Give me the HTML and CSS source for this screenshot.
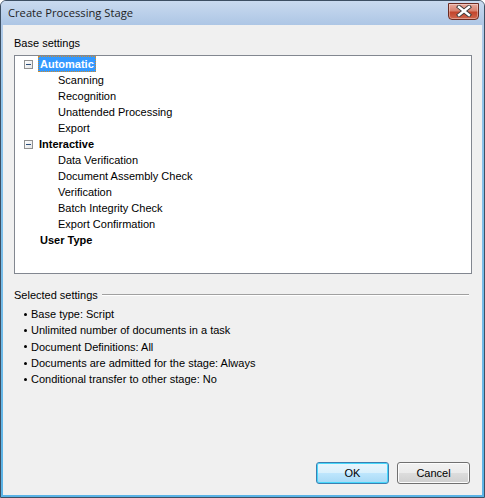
FILE: index.html
```html
<!DOCTYPE html>
<html>
<head>
<meta charset="utf-8">
<link rel="stylesheet" href="styles.css">
</head>
<body>
<div class="window">
  <div class="titlebar">
    <span class="title">Create Processing Stage</span>
    <div class="close">
      <svg width="16" height="12" viewBox="0 0 16 12">
        <path d="M3 2 L13 10 M13 2 L3 10" stroke="#3a3a3a" stroke-width="4.2" stroke-linecap="square"/>
        <path d="M3 2 L13 10 M13 2 L3 10" stroke="#ffffff" stroke-width="2.4" stroke-linecap="square"/>
      </svg>
    </div>
  </div>
  <div class="client">
    <div class="label">Base settings</div>
    <div class="tree">
      <div class="row group"><span class="exp"></span><span class="txt bold sel">Automatic</span></div>
      <div class="row child"><span class="txt">Scanning</span></div>
      <div class="row child"><span class="txt">Recognition</span></div>
      <div class="row child"><span class="txt">Unattended Processing</span></div>
      <div class="row child"><span class="txt">Export</span></div>
      <div class="row group"><span class="exp"></span><span class="txt bold">Interactive</span></div>
      <div class="row child"><span class="txt">Data Verification</span></div>
      <div class="row child"><span class="txt">Document Assembly Check</span></div>
      <div class="row child"><span class="txt">Verification</span></div>
      <div class="row child"><span class="txt">Batch Integrity Check</span></div>
      <div class="row child"><span class="txt">Export Confirmation</span></div>
      <div class="row group nochild"><span class="txt bold">User Type</span></div>
    </div>
    <div class="sep"><span>Selected settings</span><div class="line"></div></div>
    <ul class="list">
      <li>Base type: Script</li>
      <li>Unlimited number of documents in a task</li>
      <li>Document Definitions: All</li>
      <li>Documents are admitted for the stage: Always</li>
      <li>Conditional transfer to other stage: No</li>
    </ul>
    <div class="buttons">
      <button class="btn default">OK</button>
      <button class="btn">Cancel</button>
    </div>
  </div>
</div>
</body>
</html>
```
FILE: styles.css
```css
* { box-sizing: border-box; }
html, body { margin: 0; padding: 0; background: #ffffff; }
body { width: 485px; height: 498px; overflow: hidden; font-family: "Liberation Sans", Arial, sans-serif; font-size: 11px; color: #000; }
.window {
  width: 485px; height: 498px;
  border: 1px solid #3d4f63;
  border-radius: 6px 6px 0 0;
  background: linear-gradient(to bottom, #c2d6ee 0px, #b3cbe8 24px, #8fc4ea 100px, #5ab3e6 498px);
  display: flex; flex-direction: column;
  padding: 0 2px 2px 2px;
}
.titlebar {
  height: 24px; flex: none;
  display: flex; align-items: center; justify-content: space-between;
  background: linear-gradient(to bottom, #c9daef, #adc6e5);
  margin: 0 -2px;
  padding-left: 7px;
  padding-right: 5px;
  border-radius: 5px 5px 0 0;
}
.title { font-family: "Open Sans", "Noto Sans", sans-serif; font-size: 11.2px; color: #1e1e1e; margin-top: -1px; }
.close {
  width: 31px; height: 17px; margin-top: -4px;
  border: 1px solid #6b2b22; border-radius: 0 0 4px 4px;
  background: linear-gradient(to bottom, #e9a99c 0%, #d7816f 45%, #c2452d 55%, #d0664d 100%);
  display: flex; align-items: center; justify-content: center;
  box-shadow: inset 0 0 0 1px rgba(255,255,255,0.35);
}
.client {
  flex: 1; background: #f0f0f0;
  display: flex; flex-direction: column;
  padding: 11px 10px 11px 11px;
}
.label { height: 14px; line-height: 14px; }
.tree {
  margin-top: 5px;
  height: 219px; flex: none;
  border: 1px solid #828790; background: #fff;
}
.row { height: 16px; display: flex; align-items: center; }
.row.group { padding-left: 9px; }
.row.nochild { padding-left: 24px; }
.row.child { padding-left: 42px; }
.exp {
  width: 9px; height: 9px; border: 1px solid #919191; background: linear-gradient(135deg, #ffffff, #e6e6e6);
  position: relative; margin-right: 5px; flex: none;
}
.exp::after { content: ""; position: absolute; left: 1px; top: 3px; width: 5px; height: 1px; background: #2b4e7a; }
.txt { line-height: 14px; height: 16px; padding: 1px 1px; }
.bold { font-weight: bold; }
.sel { background: #3399ff; color: #fff; outline: 1px dotted #d08b2a; outline-offset: -1px; border: 1px dotted #000; padding: 0 1px; }
.sep { display: flex; align-items: center; margin-top: 14px; height: 14px; }
.sep .line { flex: 1; height: 2px; border-top: 1px solid #a0a0a0; border-bottom: 1px solid #ffffff; margin-left: 4px; margin-right: 3px; }
.list { list-style: none; margin: 4px 0 0 0; padding: 0 0 0 10px; }
.list li { height: 16.3px; line-height: 16px; display: flex; align-items: center; }
.list li::before { content: ""; width: 3px; height: 3px; border-radius: 50%; background: #000; margin-right: 4px; flex: none; }
.buttons { margin-top: auto; display: flex; justify-content: flex-end; gap: 8px; padding-right: 2px; }
.btn {
  width: 73px; height: 22px; font-family: "Liberation Sans", Arial, sans-serif; font-size: 11px; color: #000;
  border: 1px solid #707070; border-radius: 3px;
  background: linear-gradient(to bottom, #f2f2f2 0%, #ebebeb 49%, #dddddd 50%, #cfcfcf 100%);
  box-shadow: inset 0 0 0 1px #fcfcfc;
  padding: 0;
}
.btn.default { border-color: #3c7fb1; box-shadow: inset 0 0 0 1px #48d8fb; background: linear-gradient(to bottom, #eaf6fd 0%, #d9f0fc 49%, #bee6fd 50%, #a7d9f5 100%); }
```
